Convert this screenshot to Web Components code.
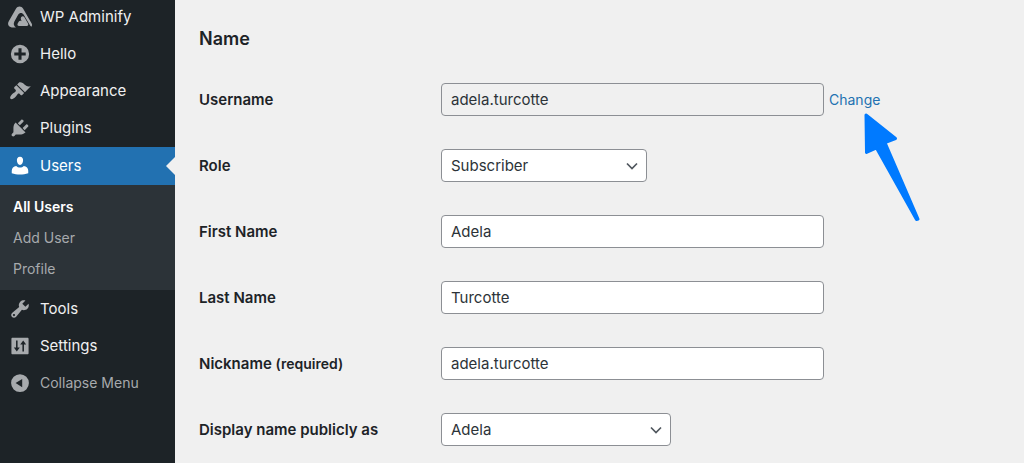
<!DOCTYPE html>
<html lang="en">
<head>
<meta charset="utf-8">
<title>Edit User</title>
<style>
  html, body { margin: 0; min-height: 100%; background: #f0f0f0; }
  body { font-family: Inter, "Liberation Sans", sans-serif; font-size: 15px; line-height: 20px; color: #3c434a; overflow-x: hidden; }
</style>
</head>
<body>
<admin-page>
  <admin-menu slot="menu">
    <menu-item icon="adminify">WP Adminify</menu-item>
    <menu-item icon="plus">Hello</menu-item>
    <menu-item icon="appearance">Appearance</menu-item>
    <menu-item icon="plugins">Plugins</menu-item>
    <menu-item icon="users" current>Users
      <sub-item slot="sub" current>All Users</sub-item>
      <sub-item slot="sub">Add User</sub-item>
      <sub-item slot="sub">Profile</sub-item>
    </menu-item>
    <menu-item icon="tools">Tools</menu-item>
    <menu-item icon="settings">Settings</menu-item>
    <menu-item icon="collapse" action>Collapse Menu</menu-item>
  </admin-menu>
  <form-section heading="Name">
    <form-field label="Username" value="adela.turcotte" readonly><change-link slot="after">Change</change-link></form-field>
    <form-field label="Role" type="select" value="Subscriber" size="short"></form-field>
    <form-field label="First Name" value="Adela"></form-field>
    <form-field label="Last Name" value="Turcotte"></form-field>
    <form-field label="Nickname" note="(required)" value="adela.turcotte"></form-field>
    <form-field label="Display name publicly as" type="select" value="Adela" size="medium"></form-field>
  </form-section>
</admin-page>

<script>
const ICONS = {
  adminify: '<path d="M3.800 19.500C.2 19.500-2 17 -.2 13.800L6.300 2.500C7.800-.2 11.300-.2 12.900 2.500L20.600 16C21.300 17.300 21 18.300 20.300 18.800C19.800 18.500 19.300 18 18.900 17.300L13.400 8C12.100 5.900 9.600 5.900 8.300 8L4.900 14C3.800 16 4.300 18 6.300 19.500Z"/><path d="M11 10.300C11.800 9 13.200 9 14 10.300L17.300 16C17.900 17.200 17.300 18.100 16.100 18.100H9.200C7.800 18.100 7.300 17 7.900 15.900L8.800 14.300C9.400 13.300 10.300 13.100 11.500 13.800C11 12.600 10.300 11.500 11 10.300Z"/>',
  plus: '<path fill-rule="evenodd" d="M10 1.700a8.300 8.300 0 1 0 0 16.600 8.300 8.300 0 0 0 0-16.600zM8.600 4.800h2.800v3.800h3.800v2.800h-3.800v3.800H8.600v-3.800H4.800V8.600h3.800z"/>',
  appearance: '<path d="M14.480 11.060L7.410 3.990l1.500-1.500c.5-.56 2.300-.47 3.510.32 1.210.8 1.430 1.280 2.910 2.100 1.180.64 2.450 1.260 4.450.85zm-.71.71L6.700 4.700 4.930 6.470c-.39.39-.39 1.020 0 1.410l1.060 1.060c.39.39.39 1.030 0 1.420-.6.6-1.430 1.110-2.210 1.690-.35.26-.7.53-1.010.84C1.430 14.230.4 16.080 1.400 17.070c.99 1 2.840-.03 4.180-1.360.31-.31.58-.66.85-1.020.57-.78 1.080-1.610 1.690-2.210.39-.39 1.020-.39 1.410 0l1.060 1.060c.39.39 1.020.39 1.410 0z"/>',
  plugins: '<path d="M13.110 4.360L9.870 7.600 8 5.730l3.240-3.240c.35-.34 1.050-.2 1.560.32.52.51.66 1.210.31 1.550zm-8 1.770l.91-1.120 9.010 9.010-1.190.84c-.71.71-2.630 1.160-3.820 1.160H6.140L4.900 17.260c-.59.59-1.540.59-2.120 0-.59-.58-.59-1.530 0-2.120l1.240-1.240v-3.880c0-1.130.4-3.190 1.090-3.890zm7.260 3.970l3.240-3.240c.34-.35 1.040-.21 1.550.31.52.51.66 1.210.31 1.550l-3.240 3.250z"/>',
  users: '<path d="M10 1.600C12.100 1.600 12.900 3.200 12.800 5C12.700 6.900 11.800 9 10 9S7.300 6.900 7.200 5C7.100 3.200 7.900 1.600 10 1.600ZM6.600 9.900C7.500 10.800 8.700 11.300 10 11.300S12.500 10.800 13.400 9.900C15.900 10.200 17.500 12 17.500 14.300V16.700C15.200 17.500 12.600 17.800 10 17.800S4.800 17.500 2.500 16.700V14.300C2.500 12 4.100 10.200 6.600 9.900Z"/>',
  tools: '<path d="M16.680 9.770c-1.340 1.340-3.300 1.670-4.950.99l-5.410 6.520c-.99.99-2.590.99-3.580 0s-.99-2.590 0-3.570l6.520-5.420c-.68-1.650-.35-3.610.99-4.950 1.280-1.280 3.120-1.620 4.720-1.060l-2.890 2.890 2.820 2.820 2.860-2.870c.53 1.580.18 3.390-1.080 4.650zM3.810 16.210c.4.39 1.040.39 1.430 0 .4-.4.4-1.040 0-1.430-.39-.4-1.030-.4-1.430 0-.39.39-.39 1.030 0 1.430z"/>',
  settings: '<path fill-rule="evenodd" d="M3.200 2.500H16.800C17.400 2.500 17.800 2.900 17.800 3.500V16.500C17.800 17.100 17.400 17.500 16.800 17.500H3.200C2.600 17.500 2.200 17.100 2.200 16.500V3.500C2.200 2.900 2.600 2.500 3.200 2.500ZM6.400 5V11.400H4.400L7.100 14.900 9.800 11.400H7.800V5ZM12.200 15V8.600H10.200L12.900 5.100 15.600 8.600H13.600V15Z"/>',
  collapse: '<path fill-rule="evenodd" d="M10 2a8.100 8.100 0 1 0 0 16.200 8.100 8.100 0 0 0 0-16.200zM12 6.300v7.600L6 10.100z"/>'
};

function define(name, render) {
  customElements.define(name, class extends HTMLElement {
    connectedCallback() {
      if (this.shadowRoot) return;
      this.attachShadow({ mode: 'open' }).innerHTML = render(this);
    }
  });
}

define('admin-page', () => `
  <style>
    :host { display: grid; grid-template-columns: 175px minmax(0, 1fr); min-height: 100vh; background: #f0f0f0; }
    main { padding: 28px 24px 16px; }
  </style>
  <slot name="menu"></slot>
  <main><slot></slot></main>`);

define('admin-menu', () => `
  <style>
    :host { display: block; background: #1d2327; }
    nav { display: flex; flex-direction: column; margin-top: -2px; }
  </style>
  <nav aria-label="Main menu"><slot></slot></nav>`);

define('menu-item', el => {
  const tag = el.hasAttribute('action') ? 'button type="button"' : 'a href="#"';
  const end = el.hasAttribute('action') ? 'button' : 'a';
  return `
  <style>
    :host { display: block; color: #f0f0f1; --icon: #a7aaad; }
    :host([current]) { color: #fff; --icon: #fff; margin-top: 1px; }
    :host([action]) { color: #a7aaad; font-size: 14px; }
    .row { display: flex; align-items: center; gap: 9px; box-sizing: border-box; width: 100%; height: 37px;
      padding: 0 9px; border: 0; margin: 0; background: none; color: inherit; font: inherit; text-decoration: none; text-align: left; }
    :host([current]) .row { position: relative; height: 38px; background: #2271b1; }
    :host([current]) .row::after { content: ""; position: absolute; right: 0; top: 50%; margin-top: -9px;
      border: 9px solid transparent; border-left: 0; border-right-color: #f0f0f0; }
    svg { flex: none; width: 22px; height: 22px; fill: var(--icon); overflow: visible; }
    .sub { display: none; }
    :host([current]) .sub { display: block; padding: 6px 0; background: #2c3338; }
  </style>
  <${tag} class="row"><svg viewBox="0 0 20 20" aria-hidden="true">${ICONS[el.getAttribute('icon')]}</svg><span><slot></slot></span></${end}>
  <div class="sub"><slot name="sub"></slot></div>`;
});

define('sub-item', () => `
  <style>
    :host { display: block; font-size: 14px; color: #a7aaad; }
    :host([current]) { color: #fff; font-weight: 600; }
    a { display: flex; align-items: center; height: 31px; padding: 0 13px; color: inherit; text-decoration: none; }
  </style>
  <a href="#"><slot></slot></a>`);

define('form-section', el => `
  <style>
    :host { display: block; }
    h2 { margin: 0 0 33px; font-size: 18px; line-height: 22px; font-weight: 600; color: #1d2327; }
    form { display: flex; flex-direction: column; gap: 33px; }
  </style>
  <h2>${el.getAttribute('heading')}</h2>
  <form><slot></slot></form>`);

define('form-field', el => {
  const value = el.getAttribute('value');
  const note = el.getAttribute('note');
  const control = el.getAttribute('type') === 'select'
    ? `<span class="select"><select id="control"><option>${value}</option></select><svg viewBox="0 0 14 14" aria-hidden="true"><path d="M2 4.500l5 5 5-5"/></svg></span>`
    : `<input id="control" type="text" value="${value}"${el.hasAttribute('readonly') ? ' readonly' : ''}>`;
  return `
  <style>
    :host { display: grid; grid-template-columns: 242px minmax(0, 383px) auto; justify-content: start; align-items: center; --w: 100%; }
    :host([size="short"]) { --w: 206px; }
    :host([size="medium"]) { --w: 230px; }
    label { font-weight: 600; color: #1d2327; }
    small { font-size: 14px; }
    input, select { display: block; box-sizing: border-box; width: 100%; height: 33px; margin: 0; padding: 0 9px;
      border: 1px solid #8c8f94; border-radius: 4px; background: #fff; color: #2c3338; font: inherit; outline: 0; appearance: none; }
    input[readonly] { background: #f0f0f0; }
    .select { display: grid; grid-template-columns: 1fr 22px; align-items: center; width: var(--w); }
    .select select { grid-area: 1 / 1 / 2 / 3; }
    .select svg { grid-area: 1 / 2; width: 14px; height: 14px; pointer-events: none; fill: none; stroke: #50575e; stroke-width: 1.700; }
  </style>
  <label for="control">${el.getAttribute('label')}${note ? ` <small>${note}</small>` : ''}</label>
  ${control}
  <slot name="after"></slot>`;
});

define('change-link', () => `
  <style>
    :host { display: block; position: relative; margin-left: 5px; font-size: 14px; }
    a { color: #2271b1; text-decoration: none; }
    svg { position: absolute; left: 34px; top: 20px; width: 60px; height: 112px; fill: #007aff; stroke: #007aff; stroke-width: 3; stroke-linejoin: round; pointer-events: none; }
  </style>
  <a href="#"><slot></slot></a>
  <svg viewBox="0 0 60 112" aria-hidden="true"><path d="M3 5L32.500 28.500 22 32.500 55 109 53.500 109.500 13.500 38 3.500 42.500Z"/></svg>`);
</script>
</body>
</html>
